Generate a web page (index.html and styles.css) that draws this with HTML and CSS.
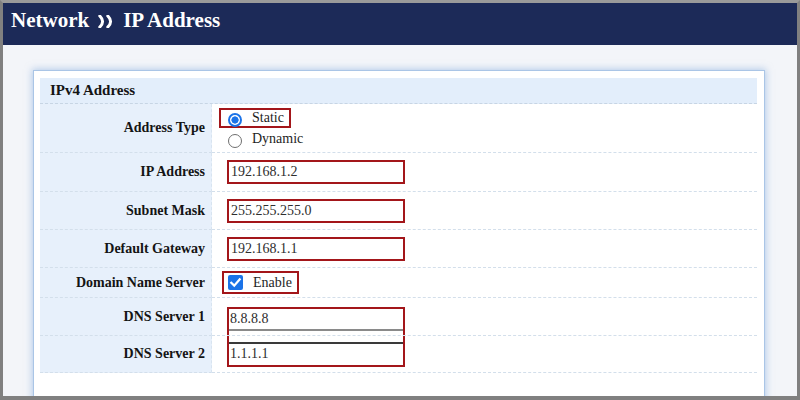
FILE: index.html
```html
<!DOCTYPE html>
<html>
<head>
<meta charset="utf-8">
<link rel="stylesheet" href="styles.css">
</head>
<body>
<div class="frame">
  <div class="topbar">
    <span class="crumb">Network</span>
    <svg class="chev" width="17" height="13" viewBox="0 0 17 13"><path d="M1.8 1 Q7.4 6.5 1.8 12" /><path d="M9.8 1 Q15.4 6.5 9.8 12" /></svg>
    <span class="crumb">IP Address</span>
  </div>
  <div class="content">
    <div class="panel">
      <div class="sec-head">IPv4 Address</div>
      <div class="grid">
        <div class="label r1">Address Type</div>
        <div class="value r1 top">
          <div class="radio-list">
            <label class="hl radio-opt"><span class="radio on"></span><span>Static</span></label>
            <label class="radio-opt plain"><span class="radio"></span><span>Dynamic</span></label>
          </div>
        </div>

        <div class="label r2">IP Address</div>
        <div class="value r2"><div class="field">192.168.1.2</div></div>

        <div class="label r3">Subnet Mask</div>
        <div class="value r3"><div class="field">255.255.255.0</div></div>

        <div class="label r4">Default Gateway</div>
        <div class="value r4"><div class="field">192.168.1.1</div></div>

        <div class="label r5">Domain Name Server</div>
        <div class="value r5">
          <label class="hl check-opt"><span class="check"><svg width="15" height="15" viewBox="0 0 15 15"><path d="M3.3 7.8 L6.2 10.6 L11.7 4.3" /></svg></span><span>Enable</span></label>
        </div>

        <div class="label r6">DNS Server 1</div>
        <div class="value r6 dns1">
          <div class="dns-top"><div class="dns-field first">8.8.8.8</div></div>
        </div>

        <div class="label r7">DNS Server 2</div>
        <div class="value r7 dns2">
          <div class="dns-bot"><div class="dns-field second">1.1.1.1</div></div>
        </div>
      </div>
    </div>
  </div>
</div>
</body>
</html>
```

FILE: styles.css
```css
html, body {
  margin: 0;
  padding: 0;
}
body {
  font-family: "Liberation Serif", "Times New Roman", serif;
  color: #141414;
}
.frame {
  width: 800px;
  height: 400px;
  box-sizing: border-box;
  border: 3px solid #808080;
  border-top-color: #9a9a9a;
  border-bottom-width: 4px;
  background: #f3f5f9;
  overflow: hidden;
}
.topbar {
  height: 42px;
  box-sizing: border-box;
  padding: 1px 0 0 8px;
  line-height: 32px;
  background: #1c2a58;
  color: #ffffff;
  font-size: 21px;
  font-weight: bold;
  display: flex;
  align-items: flex-start;
}
.chev {
  margin: 11px 8px 0 9px;
  flex: none;
}
.chev path {
  fill: none;
  stroke: #ffffff;
  stroke-width: 3;
  stroke-linecap: round;
}
.content {
  padding: 25px 0 0 30px;
}
.panel {
  width: 732px;
  box-sizing: border-box;
  background: #ffffff;
  border: 1px solid #aac5e6;
  box-shadow: 0 0 7px 1px rgba(130, 170, 220, 0.55);
  padding: 7px 7px 30px 6px;
}
.sec-head {
  height: 26px;
  box-sizing: border-box;
  line-height: 25px;
  padding-left: 10px;
  background: #e3eefb;
  border-bottom: 1px dashed #c7d5e4;
  font-size: 15px;
  font-weight: bold;
}
.grid {
  display: grid;
  grid-template-columns: 172px 1fr;
}
.label, .value {
  box-sizing: border-box;
  border-bottom: 1px dashed #d3dfeb;
  display: flex;
  align-items: center;
}
.label {
  justify-content: flex-end;
  padding-right: 6px;
  background: #e7f0fb;
  border-right: 1px dashed #d8e4f0;
  font-size: 14px;
  font-weight: bold;
}
.value {
  padding-left: 15px;
  font-size: 14px;
}
.r1 { height: 49px; }
.r2 { height: 39px; }
.r3 { height: 38px; }
.r4 { height: 38px; }
.r5 { height: 30px; }
.r6 { height: 38px; }
.r7 { height: 37px; }

.value.top {
  align-items: flex-start;
  padding-top: 4px;
}
.radio-list {
  margin-left: -8px;
  display: flex;
  flex-direction: column;
  align-items: flex-start;
}
.hl {
  border: 2px solid #a3161a;
  box-sizing: border-box;
}
.radio-opt {
  display: flex;
  align-items: center;
  height: 20px;
  line-height: 16px;
  color: #1e1e1e;
}
.radio-opt.hl {
  padding: 0 4px 0 7px;
  width: 72px;
}
.radio-opt.plain {
  padding-left: 9px;
  margin-top: 1px;
}
.radio {
  width: 14px;
  height: 14px;
  box-sizing: border-box;
  border-radius: 50%;
  border: 1px solid #6f6f6f;
  background: #ffffff;
  margin-right: 10px;
  margin-top: 4px;
  flex: none;
}
.radio.on {
  border: 2px solid #1a73e8;
  background: radial-gradient(circle, #1a73e8 0 3.3px, #ffffff 3.9px);
}
.field {
  width: 178px;
  height: 24px;
  box-sizing: border-box;
  border: 2px solid #a3161a;
  padding-left: 2px;
  line-height: 20px;
  color: #2e2e2e;
  background: #fff;
}
.check-opt {
  margin-left: -5px;
  width: 77px;
  height: 23px;
  padding-left: 4px;
  display: flex;
  align-items: center;
  color: #1e1e1e;
}
.check {
  width: 15px;
  height: 15px;
  border-radius: 2px;
  background: #1a73e8;
  margin-right: 10px;
  flex: none;
  display: block;
}
.check svg { display: block; }
.check path {
  fill: none;
  stroke: #ffffff;
  stroke-width: 2.2;
  stroke-linecap: square;
}
.value.dns1 {
  align-items: stretch;
  padding-top: 9px;
}
.value.dns2 {
  align-items: stretch;
  padding-bottom: 5px;
}
.dns-top {
  width: 178px;
  box-sizing: border-box;
  border: 2px solid #a3161a;
  border-bottom: none;
}
.dns-bot {
  width: 178px;
  box-sizing: border-box;
  border: 2px solid #a3161a;
  border-top: none;
  display: flex;
  flex-direction: column;
  justify-content: flex-end;
}
.dns-field {
  height: 22px;
  box-sizing: border-box;
  padding-left: 1px;
  line-height: 19px;
  color: #2e2e2e;
}
.dns-field.first {
  border-bottom: 2px solid #8a8a8a;
}
.dns-field.second {
  border-top: 2px solid #3a3a3a;
  height: 23px;
  line-height: 20px;
}
```
